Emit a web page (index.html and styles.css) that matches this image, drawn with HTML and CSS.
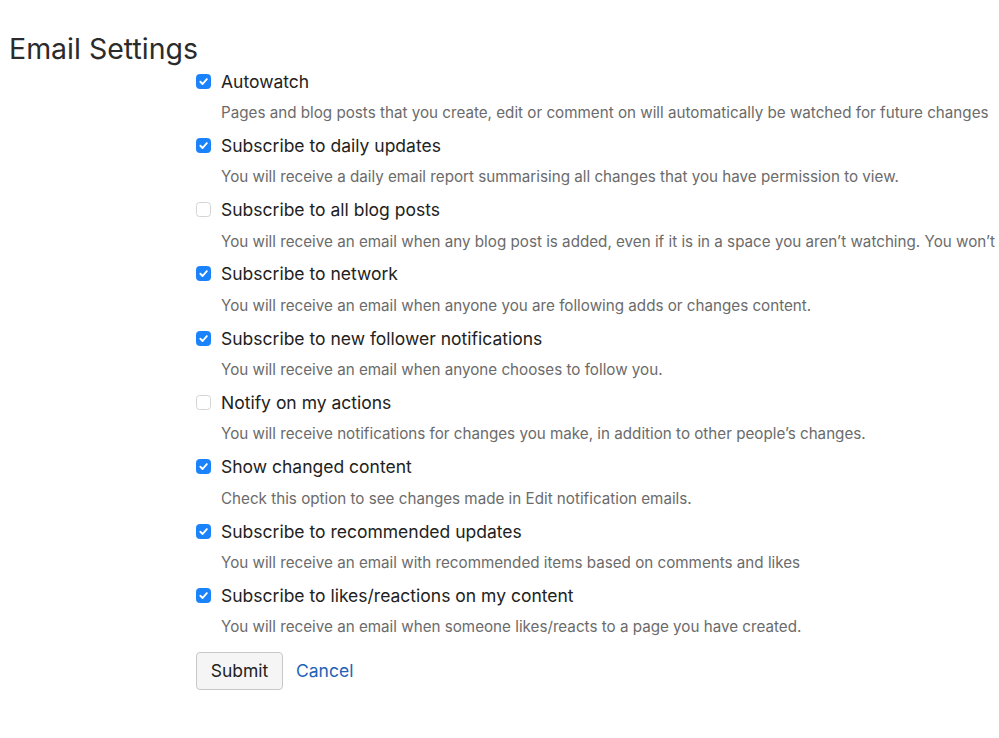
FILE: index.html
```html
<!DOCTYPE html>
<html lang="en">
<head>
<meta charset="utf-8">
<title>Email Settings</title>
<link rel="stylesheet" href="styles.css">
</head>
<body>
<h1 class="title">Email Settings</h1>
<form class="settings">
  <div class="option">
    <label class="row"><span class="box on"><svg viewBox="0 0 14 14"><path d="M3.6 7.3 L6 9.7 L10.6 4.4"/></svg></span><span class="label">Autowatch</span></label>
    <div class="desc">Pages and blog posts that you create, edit or comment on will automatically be watched for future changes</div>
  </div>
  <div class="option">
    <label class="row"><span class="box on"><svg viewBox="0 0 14 14"><path d="M3.6 7.3 L6 9.7 L10.6 4.4"/></svg></span><span class="label">Subscribe to daily updates</span></label>
    <div class="desc">You will receive a daily email report summarising all changes that you have permission to view.</div>
  </div>
  <div class="option">
    <label class="row"><span class="box"></span><span class="label">Subscribe to all blog posts</span></label>
    <div class="desc">You will receive an email when any blog post is added, even if it is in a space you aren’t watching. You won’t receive emails for blog posts you can’t view.</div>
  </div>
  <div class="option">
    <label class="row"><span class="box on"><svg viewBox="0 0 14 14"><path d="M3.6 7.3 L6 9.7 L10.6 4.4"/></svg></span><span class="label">Subscribe to network</span></label>
    <div class="desc">You will receive an email when anyone you are following adds or changes content.</div>
  </div>
  <div class="option">
    <label class="row"><span class="box on"><svg viewBox="0 0 14 14"><path d="M3.6 7.3 L6 9.7 L10.6 4.4"/></svg></span><span class="label">Subscribe to new follower notifications</span></label>
    <div class="desc">You will receive an email when anyone chooses to follow you.</div>
  </div>
  <div class="option">
    <label class="row"><span class="box"></span><span class="label">Notify on my actions</span></label>
    <div class="desc">You will receive notifications for changes you make, in addition to other people’s changes.</div>
  </div>
  <div class="option">
    <label class="row"><span class="box on"><svg viewBox="0 0 14 14"><path d="M3.6 7.3 L6 9.7 L10.6 4.4"/></svg></span><span class="label">Show changed content</span></label>
    <div class="desc">Check this option to see changes made in Edit notification emails.</div>
  </div>
  <div class="option">
    <label class="row"><span class="box on"><svg viewBox="0 0 14 14"><path d="M3.6 7.3 L6 9.7 L10.6 4.4"/></svg></span><span class="label">Subscribe to recommended updates</span></label>
    <div class="desc">You will receive an email with recommended items based on comments and likes</div>
  </div>
  <div class="option">
    <label class="row"><span class="box on"><svg viewBox="0 0 14 14"><path d="M3.6 7.3 L6 9.7 L10.6 4.4"/></svg></span><span class="label">Subscribe to likes/reactions on my content</span></label>
    <div class="desc">You will receive an email when someone likes/reacts to a page you have created.</div>
  </div>
  <div class="actions">
    <button type="button" class="btn">Submit</button>
    <a class="cancel" href="#">Cancel</a>
  </div>
</form>
</body>
</html>
```
FILE: styles.css
```css
html, body {
  margin: 0;
  padding: 0;
  background: #ffffff;
  overflow: hidden;
}
body {
  font-family: Inter, "Liberation Sans", Arial, sans-serif;
  color: #222222;
  width: 999px;
  height: 738px;
}
.title {
  margin: 0;
  padding: 31px 0 0 9px;
  font-size: 28.5px;
  font-weight: 400;
  line-height: 36px;
  color: #2b2b2b;
}
.settings {
  padding-left: 196px;
  margin-top: 0;
}
.option {
  display: flex;
  flex-direction: column;
  height: 64.3px;
}
.row {
  display: flex;
  align-items: center;
  gap: 10px;
  height: 28px;
}
.box {
  width: 15px;
  height: 15px;
  box-sizing: border-box;
  border: 1px solid #d4d4d4;
  border-radius: 3.5px;
  background: #fff;
  display: flex;
  align-items: center;
  justify-content: center;
  flex: none;
}
.box.on {
  background: #1a82fb;
  border-color: #1a82fb;
}
.box svg {
  width: 13px;
  height: 13px;
  fill: none;
  stroke: #fff;
  stroke-width: 2;
  stroke-linecap: round;
  stroke-linejoin: round;
}
.label {
  font-size: 17.5px;
  color: #222222;
}
.desc {
  padding-left: 25px;
  margin-top: 8px;
  font-size: 15.2px;
  color: #6b6b6b;
  white-space: nowrap;
  line-height: 20px;
}
.actions {
  display: flex;
  align-items: center;
  gap: 13px;
  margin-top: 6px;
}
.btn {
  width: 87px;
  height: 38px;
  font-family: Inter, "Liberation Sans", Arial, sans-serif;
  font-size: 17.5px;
  color: #222;
  background: #f5f5f5;
  border: 1px solid #c8c8c8;
  border-radius: 4px;
}
.cancel {
  font-size: 17.5px;
  color: #1c63b7;
  text-decoration: none;
}
```
